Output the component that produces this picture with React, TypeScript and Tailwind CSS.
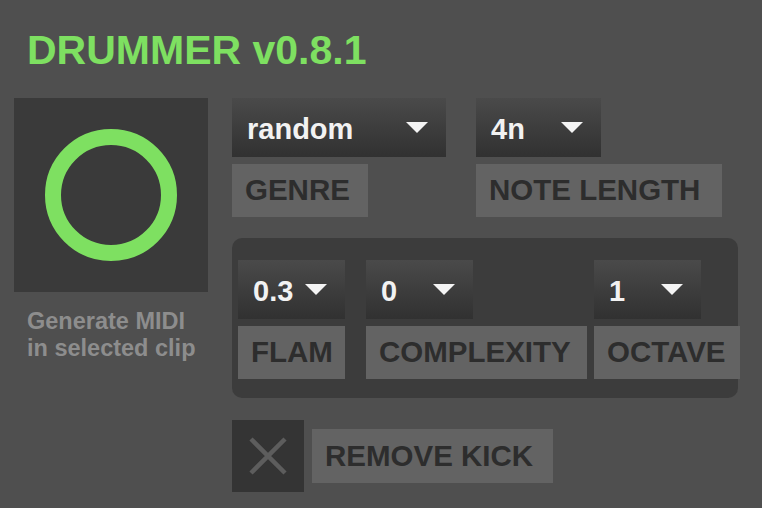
const font = { fontFamily: '"Liberation Sans", Arial, Helvetica, sans-serif' };

function Arrow() {
  return (
    <svg width="22" height="11" viewBox="0 0 22 11" className="shrink-0">
      <polygon points="0,0 22,0 11,11" fill="#f4f4f4" />
    </svg>
  );
}

interface DropProps {
  value: string;
  width: string;
}

function Dropdown({ value, width }: DropProps) {
  return (
    <div
      className={`${width} h-[59px] flex items-center justify-between pl-[15px] pr-[18px] bg-linear-to-b from-[#4a4a4a] to-[#313131]`}
    >
      <span className="pt-[4px] text-[29px] font-bold leading-[31px] text-[#f2f2f2]">
        {value}
      </span>
      <Arrow />
    </div>
  );
}

interface LabelProps {
  text: string;
  width: string;
}

function Label({ text, width }: LabelProps) {
  return (
    <div
      className={`${width} h-[53px] flex items-center pl-[13px] bg-[#636363] text-[29.5px] font-bold text-[#2d2d2d] whitespace-nowrap`}
    >
      {text}
    </div>
  );
}

export default function App() {
  return (
    <div className="w-[762px] h-[508px] bg-[#4f4f4f] overflow-hidden" style={font}>
      <h1 className="pl-[27px] pt-[29px] text-[41px] leading-[42px] font-bold text-[#7ee061]">
        DRUMMER v0.8.1
      </h1>

      <div className="flex mt-[27px]">
        {/* trigger + caption */}
        <div className="ml-[14px] w-[194px] flex flex-col">
          <div className="w-[194px] h-[194px] bg-[#3a3a3a] flex items-center justify-center">
            <div className="w-[132px] h-[132px] rounded-full border-[16px] border-[#7ee061]" />
          </div>
          <p className="mt-[16px] pl-[13px] text-[23.5px] leading-[27px] font-bold text-[#8d8d8d] whitespace-nowrap">
            Generate MIDI
            <br />
            in selected clip
          </p>
        </div>

        {/* controls */}
        <div className="ml-[24px] flex flex-col">
          <div className="flex">
            <div className="flex flex-col gap-[7px]">
              <Dropdown value="random" width="w-[214px]" />
              <Label text="GENRE" width="w-[136px]" />
            </div>
            <div className="ml-[30px] flex flex-col gap-[7px]">
              <Dropdown value="4n" width="w-[125px]" />
              <Label text="NOTE LENGTH" width="w-[246px]" />
            </div>
          </div>

          <div className="mt-[21px] w-[506px] h-[160px] rounded-[10px] bg-[#3c3c3c] pt-[22px] pl-[6px] flex items-start">
            <div className="flex flex-col gap-[7px]">
              <Dropdown value="0.3" width="w-[107px]" />
              <Label text="FLAM" width="w-[107px]" />
            </div>
            <div className="ml-[21px] flex flex-col gap-[7px]">
              <Dropdown value="0" width="w-[107px]" />
              <Label text="COMPLEXITY" width="w-[221px]" />
            </div>
            <div className="ml-[7px] flex flex-col gap-[7px]">
              <Dropdown value="1" width="w-[107px]" />
              <Label text="OCTAVE" width="w-[146px]" />
            </div>
          </div>

          <div className="mt-[22px] flex items-center gap-[8px]">
            <div className="w-[72px] h-[72px] bg-[#343434] flex items-center justify-center">
              <svg width="38" height="38" viewBox="0 0 38 38">
                <path d="M2 2 L36 36 M36 2 L2 36" stroke="#5d5d5d" strokeWidth="4.5" />
              </svg>
            </div>
            <div className="w-[241px] h-[54px] flex items-center pl-[13px] bg-[#636363] text-[29.5px] font-bold text-[#2d2d2d]">
              REMOVE KICK
            </div>
          </div>
        </div>
      </div>
    </div>
  );
}
